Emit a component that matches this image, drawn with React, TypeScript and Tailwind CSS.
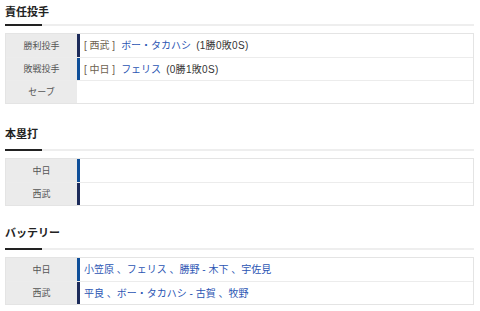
const FONT = "font-['Liberation_Sans','Noto_Sans_CJK_JP',sans-serif]";

type Row = { label: string; bar?: 'd' | 's'; content?: React.ReactNode };

function Name({ children, className = '' }: { children: React.ReactNode; className?: string }) {
  return <span className={`text-[#2b55b3] ${className}`}>{children}</span>;
}

function Team({ children }: { children: React.ReactNode }) {
  return <span className="text-[#6d6250]">[ {children} ]</span>;
}

function Section({ title, rows, top, pb }: { title: string; rows: Row[]; top: string; pb: string }) {
  return (
    <section className={top}>
      <h2 className={`font-['Noto_Sans_CJK_JP',sans-serif] text-[11px] font-bold leading-[18px] text-[#222] ${pb}`}>{title}</h2>
      <div className="flex h-[2px]">
        <div className="w-[37px] bg-[#222]" />
        <div className="flex-1 bg-[#eeeeee]" />
      </div>
      <div className="mt-[7px] border border-[#e4e4e4]">
        {rows.map((r, i) => (
          <div key={i} className={`flex h-[23px] ${i > 0 ? 'border-t border-[#ececec]' : ''}`}>
            <div className="flex w-[71px] shrink-0 items-center justify-center bg-[#ebebeb] font-['Noto_Sans_CJK_JP',sans-serif] text-[9px] text-[#555]">
              {r.label}
            </div>
            <div
              className={`flex flex-1 items-center whitespace-pre pl-[4px] text-[10px] text-[#333] border-l-[3px] ${
                r.bar === 'd' ? 'border-[#0f4f99]' : r.bar === 's' ? 'border-[#1c2b5a]' : 'border-transparent'
              }`}
            >
              {r.content}
            </div>
          </div>
        ))}
      </div>
    </section>
  );
}

export default function App() {
  return (
    <div className={`${FONT} w-[480px] h-[311px] overflow-hidden bg-white pl-[5px] pr-[6px]`}>
      <Section
        top="pt-[2px]"
        pb="pb-[4px]"
        title="責任投手"
        rows={[
          {
            label: '勝利投手',
            bar: 's',
            content: (
              <>
                <Team>西武</Team>
                <Name className="ml-[6px] mr-[5px]">ボー・タカハシ</Name>
                <span className="tracking-[0.3px]">(1勝0敗0S)</span>
              </>
            ),
          },
          {
            label: '敗戦投手',
            bar: 'd',
            content: (
              <>
                <Team>中日</Team>
                <Name className="ml-[6px] mr-[5px]">フェリス</Name>
                <span className="tracking-[0.3px]">(0勝1敗0S)</span>
              </>
            ),
          },
          { label: 'セーブ' },
        ]}
      />
      <Section
        top="mt-[20px]"
        pb="pb-[7px]"
        title="本塁打"
        rows={[
          { label: '中日', bar: 'd' },
          { label: '西武', bar: 's' },
        ]}
      />
      <Section
        top="mt-[17px]"
        pb="pb-[7px]"
        title="バッテリー"
        rows={[
          { label: '中日', bar: 'd', content: <Name>小笠原 、フェリス 、勝野 - 木下 、宇佐見</Name> },
          { label: '西武', bar: 's', content: <Name>平良 、ボー・タカハシ - 古賀 、牧野</Name> },
        ]}
      />
    </div>
  );
}
